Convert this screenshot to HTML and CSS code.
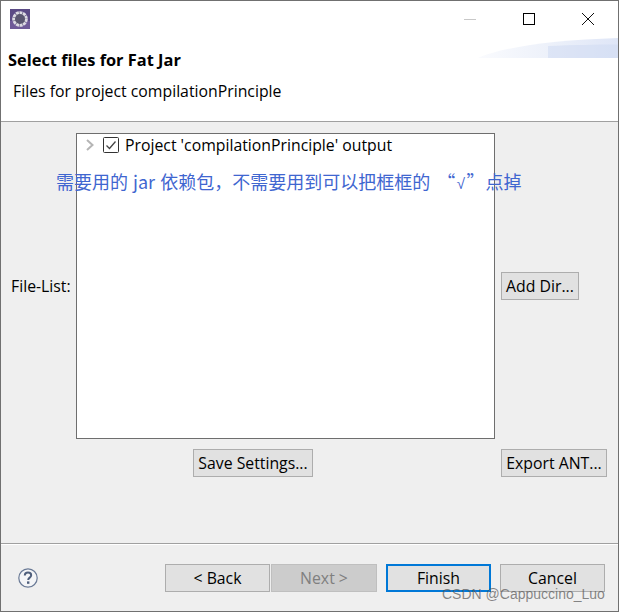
FILE: index.html
```html
<!DOCTYPE html>
<html lang="en">
<head>
<meta charset="utf-8">
<title>Select files for Fat Jar</title>
<link rel="stylesheet" href="styles.css">
</head>
<body>
<div class="window">
  <header class="head">
    <svg class="banner" width="140" height="20" viewBox="0 0 140 20" aria-hidden="true">
      <defs>
        <linearGradient id="bg" x1="0" x2="1" y1="0" y2="0">
          <stop offset="0" stop-color="#fafbfe"/>
          <stop offset="0.5" stop-color="#edf1fa"/>
          <stop offset="1" stop-color="#dfe6f7"/>
        </linearGradient>
      </defs>
      <path d="M0 20C25 9 75 2 140 0V20Z" fill="url(#bg)"/>
      <path d="M70 20V8C95 7 120 6.500 140 6.500V20Z" fill="#cfdaf2" opacity=".55"/>
    </svg>
    <div class="titlebar">
      <svg class="appicon" width="20" height="20" viewBox="0 0 20 20" aria-hidden="true">
        <rect width="20" height="20" fill="#5b4a85"/>
        <rect x="0" y="12" width="20" height="8" fill="#6f5a98"/>
        <circle cx="10" cy="10" r="6.400" fill="#5a5670" stroke="#dcdae2" stroke-width="2.800" stroke-dasharray="3 .6"/>
      </svg>
      <div class="controls">
        <svg width="14" height="14" viewBox="0 0 14 14" aria-hidden="true"><path d="M1 7.500H13" stroke="#c8c8c8" fill="none"/></svg>
        <svg width="14" height="14" viewBox="0 0 14 14" aria-hidden="true"><rect x="1.500" y="1.500" width="11" height="11" stroke="#000" fill="none"/></svg>
        <svg width="14" height="14" viewBox="0 0 14 14" aria-hidden="true"><path d="M1 1L13 13M13 1L1 13" stroke="#111" fill="none"/></svg>
      </div>
    </div>
    <h1 class="title">Select files for Fat Jar</h1>
    <p class="subtitle">Files for project compilationPrinciple</p>
  </header>
  <main class="body">
    <label class="filelabel">File-List:</label>
    <div class="list">
      <div class="row">
        <svg class="chev" width="10" height="14" viewBox="0 0 10 14" aria-hidden="true"><path d="M2 2L7.500 7L2 12" stroke="#b5b5b5" stroke-width="2" fill="none"/></svg>
        <svg class="check" width="16" height="16" viewBox="0 0 16 16" aria-hidden="true"><rect x=".5" y=".5" width="15" height="15" rx="1" fill="#fff" stroke="#333"/><path d="M3.500 8.500L6.500 11.500L12.500 4.500" stroke="#444" stroke-width="1.300" fill="none"/></svg>
        <span>Project 'compilationPrinciple' output</span>
      </div>
    </div>
    <button class="btn adddir">Add Dir...</button>
    <button class="btn save">Save Settings...</button>
    <button class="btn export">Export ANT...</button>
  </main>
  <footer class="foot">
    <svg class="help" width="20" height="20" viewBox="0 0 20 20" aria-hidden="true">
      <circle cx="10" cy="10" r="9.200" fill="#f4f5f7" stroke="#6a7a96" stroke-width="1.200"/>
      <path d="M6.800 7.600C6.800 5.600 8.200 4.600 10 4.600C11.900 4.600 13.200 5.700 13.200 7.300C13.200 9.600 10.200 9.600 10.200 12" stroke="#4f5f7c" stroke-width="2" fill="none"/>
      <rect x="9" y="13.400" width="2.400" height="2.400" fill="#4f5f7c"/>
    </svg>
    <div class="actions">
      <button class="btn wide">&lt; Back</button>
      <button class="btn wide next" disabled>Next &gt;</button>
      <button class="btn wide finish">Finish</button>
      <button class="btn wide cancel">Cancel</button>
    </div>
  </footer>
  <div class="note">需要用的 jar 依赖包，不需要用到可以把框框的 <span class="quote">“<span class="root">√</span>”</span>点掉</div>
  <div class="mark">CSDN @Cappuccino_Luo</div>
</div>
</body>
</html>
```

FILE: styles.css
```css
* { box-sizing: border-box; }
html, body { margin: 0; padding: 0; }
body { width: 619px; height: 612px; overflow: hidden; background: #efefef; }
.window {
  position: relative;
  width: 619px;
  height: 612px;
  display: flex;
  flex-direction: column;
  border: 1px solid #707070;
  background: #efefef;
  font-family: "Open Sans", "Noto Sans CJK SC", sans-serif;
  font-size: 15.8px;
  color: #000;
}
.head {
  position: relative;
  height: 121px;
  background: #fff;
  border-bottom: 1px solid #a0a0a0;
  flex: none;
}
.banner { position: absolute; right: 0; top: 37px; }
.titlebar { display: flex; align-items: center; justify-content: space-between; height: 36px; padding: 0 23px 0 9px; position: relative; }
.controls { display: flex; gap: 45px; }
.title { margin: 11px 0 0 7px; font-size: 16.4px; font-weight: 700; line-height: 24px; position: relative; }
.subtitle { margin: 7px 0 0 12px; line-height: 24px; position: relative; }
.body {
  flex: 1;
  display: grid;
  grid-template-columns: 75px 425px 1fr;
  grid-template-rows: 306px 28px;
  row-gap: 10px;
  padding-top: 11px;
  border-bottom: 1px solid #a0a0a0;
  box-shadow: 0 1px 0 #fff;
}
.filelabel { align-self: center; padding-left: 10px; white-space: nowrap; }
.list { width: 419px; background: #fff; border: 1px solid #6e6e6e; }
.row { display: flex; align-items: center; height: 22px; padding-left: 8px; }
.chev { flex: none; }
.check { margin-left: 8px; margin-right: 6px; flex: none; }
.btn {
  font: inherit;
  color: #000;
  height: 28px;
  padding: 0;
  background: #e1e1e1;
  border: 1px solid #adadad;
  white-space: nowrap;
}
.adddir { align-self: center; justify-self: start; width: 78px; }
.save { grid-column: 2; grid-row: 2; justify-self: start; margin-left: 117px; width: 120px; }
.export { grid-column: 3; grid-row: 2; justify-self: start; width: 106px; }
.foot { display: flex; align-items: center; height: 67px; flex: none; padding: 0 13px 0 17px; justify-content: space-between; }
.actions { display: flex; }
.wide { width: 105px; }
.next { margin-left: 1px; width: 106px; background: #ccc; color: #7f7f7f; border-color: #bfbfbf; }
.finish { margin-left: 9px; border: 2px solid #0078d7; }
.cancel { margin-left: 9px; }
.note {
  position: absolute;
  left: 55px;
  top: 168px;
  font-size: 18px;
  line-height: 24px;
  word-spacing: 1px;
  color: #3f66d0;
  white-space: nowrap;
  font-family: "Noto Sans CJK SC", sans-serif;
}
.quote { margin-left: 2px; margin-right: 1px; }
.root { font-family: "Liberation Sans", sans-serif; font-size: 15px; margin: 0 1.5px; }
.mark {
  position: absolute;
  left: 441px;
  top: 584px;
  font-size: 14px;
  line-height: 18px;
  color: rgba(90, 90, 90, .72);
  font-family: "Liberation Sans", sans-serif;
  white-space: nowrap;
}
```
